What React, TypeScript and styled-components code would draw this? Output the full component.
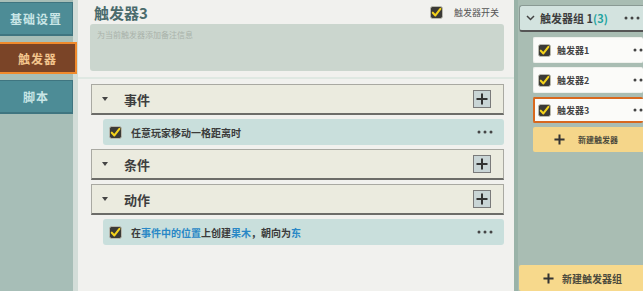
import React from 'react';
import styled, { createGlobalStyle } from 'styled-components';

const GlobalStyle = createGlobalStyle`
  body {
    margin: 0;
    font-family: "Noto Sans CJK SC", "Noto Sans", sans-serif;
    background: #f1f1ee;
  }
`

const Screen = styled.div`
  display: flex;
  width: 643px;
  height: 291px;
  overflow: hidden;
`

const LeftNav = styled.div`
  width: 73px;
  flex-shrink: 0;
  background: #a7beb7;
  display: flex;
  flex-direction: column;
  gap: 6px;
  padding-top: 2px;
  border-right: 5px solid #d3ddd8;
`

const NavTab = styled.div<{ active?: boolean }>`
  height: ${p => (p.active ? '28px' : '31px')};
  display: flex;
  align-items: center;
  justify-content: center;
  font-size: 12px;
  font-weight: 700;
  letter-spacing: 1px;
  color: ${p => (p.active ? '#f3c58d' : '#c9e6e6')};
  background: ${p => (p.active ? '#7a4427' : '#4d8c96')};
  border: ${p => (p.active ? '2px solid #f08a2c' : '1px solid #3f7580')};
  border-left: none;
  border-bottom-width: 2px;
  margin-right: ${p => (p.active ? '-4px' : '0')};
  position: relative;
`

const Main = styled.div`
  flex: 1;
  background: #f1f1ee;
  display: flex;
  flex-direction: column;
  padding: 0 10px 0 12px;
`

const TitleRow = styled.div`
  height: 24px;
  display: flex;
  align-items: center;
  padding-left: 4px;
`

const Title = styled.div`
  font-size: 15px;
  font-weight: 700;
  color: #4a6b6c;
  flex: 1;
`

const SwitchLabel = styled.span`
  font-size: 9px;
  color: #555;
  margin-left: 11px;
  margin-right: 5px;
`

const NoteBox = styled.div`
  height: 47px;
  background: #cbd6ce;
  border-radius: 3px;
  padding: 5px 7px;
  font-size: 8px;
  color: #a9b2aa;
  box-sizing: border-box;
`

const Divider = styled.div`
  height: 2px;
  background: #dfe8e2;
  margin: 6px -10px 5px -12px;
`

const Sections = styled.div`
  display: flex;
  flex-direction: column;
  gap: 4px;
  padding-left: 1px;
`

const SectionHeader = styled.div`
  height: 31px;
  box-sizing: border-box;
  background: #ebebdf;
  border: 1px solid #a9a9a2;
  border-bottom: 2px solid #6c6c68;
  display: flex;
  align-items: center;
  padding: 0 12px 0 10px;
`

const Caret = styled.span`
  width: 0;
  height: 0;
  border-left: 3px solid transparent;
  border-right: 3px solid transparent;
  border-top: 4px solid #444;
  margin-right: 16px;
`

const SectionTitle = styled.span`
  flex: 1;
  font-size: 13px;
  font-weight: 700;
  color: #3e3e3e;
`

const PlusButton = styled.div`
  width: 18px;
  height: 18px;
  box-sizing: border-box;
  background: #c9d5d6;
  border: 1px solid #7a7a7a;
  display: flex;
  align-items: center;
  justify-content: center;
`

const RuleRow = styled.div`
  height: 26px;
  margin-left: 12px;
  background: #c9dfdc;
  border-radius: 3px;
  display: flex;
  align-items: center;
  padding: 0 11px 0 6px;
  gap: 9px;
`

const RuleText = styled.span`
  flex: 1;
  font-size: 10px;
  font-weight: 700;
  color: #3b3b3b;
`

const Link = styled.span`
  color: #2a88c6;
`

const RightSplit = styled.div`
  width: 4px;
  flex-shrink: 0;
  background: #9ab3a8;
`

const RightPanel = styled.div`
  width: 125px;
  flex-shrink: 0;
  background: #a9bdb3;
  display: flex;
  flex-direction: column;
  padding-top: 5px;
  padding-left: 1px;
  box-sizing: border-box;
`

const GroupHeader = styled.div`
  height: 27px;
  box-sizing: border-box;
  background: #d3e3df;
  border: 1px solid #8a9a94;
  border-bottom: 2px solid #555;
  border-right: none;
  border-radius: 3px 0 0 3px;
  display: flex;
  align-items: center;
  padding: 0 3px 0 6px;
  gap: 5px;
`

const GroupTitle = styled.span`
  flex: 1;
  font-size: 11px;
  font-weight: 700;
  color: #3d3d3d;
  white-space: nowrap;
`

const Count = styled.span`
  color: #1fa3a0;
`

const TriggerList = styled.div`
  display: flex;
  flex-direction: column;
  gap: 4px;
  padding: 5px 0 0 14px;
`

const TriggerItem = styled.div<{ selected?: boolean }>`
  height: 26px;
  box-sizing: border-box;
  background: #fbfbf9;
  border-radius: 2px;
  border: ${p => (p.selected ? '2px solid #d8681e' : '1px solid #eef0ec')};
  border-right: none;
  display: flex;
  align-items: center;
  padding-left: ${p => (p.selected ? '3px' : '4px')};
  gap: 6px;
  white-space: nowrap;
  overflow: hidden;
`

const TriggerName = styled.span`
  flex: 1;
  font-size: 9px;
  font-weight: 700;
  color: #444;
`

const YellowButton = styled.div<{ tall?: boolean }>`
  height: ${p => (p.tall ? '26px' : '25px')};
  background: ${p => (p.tall ? '#f7d98c' : '#f5d68a')};
  border-radius: 2px 0 0 2px;
  display: flex;
  align-items: center;
  padding-left: ${p => (p.tall ? '24px' : '21px')};
  gap: ${p => (p.tall ? '8px' : '13px')};
  font-size: ${p => (p.tall ? 10 : 8)}px;
  font-weight: 700;
  color: #4b4a3c;
  white-space: nowrap;
`

const Spacer = styled.div`
  flex: 1;
`

function CheckBox({ size = 13 }: { size?: number }) {
  return (
    <svg width={size} height={size} viewBox="0 0 14 14" style={{ flexShrink: 0 }}>
      <rect x="0.5" y="0.5" width="13" height="13" rx="2.5" fill="#3b3a36" stroke="#bdbdb2" />
      <path d="M3 7.2 L5.8 10.2 L11.2 3" fill="none" stroke="#f4d21c" strokeWidth="2.2" strokeLinecap="round" strokeLinejoin="round" />
    </svg>
  );
}

function Plus({ size = 12, stroke = 2 }: { size?: number; stroke?: number }) {
  return (
    <svg width={size} height={size} viewBox="0 0 12 12">
      <path d="M6 0.5 V11.5 M0.5 6 H11.5" stroke="#333" strokeWidth={stroke} />
    </svg>
  );
}

function Dots({ count = 3 }: { count?: number }) {
  const w = count * 6 - 2;
  return (
    <svg width={w} height="4" viewBox={`0 0 ${w} 4`} style={{ flexShrink: 0 }}>
      {Array.from({ length: count }).map((_, i) => (
        <circle key={i} cx={2 + i * 6} cy="2" r="1.5" fill="#444" />
      ))}
    </svg>
  );
}

function Chevron() {
  return (
    <svg width="9" height="6" viewBox="0 0 9 6">
      <path d="M1 1 L4.5 4.5 L8 1" fill="none" stroke="#444" strokeWidth="1.5" />
    </svg>
  );
}

export default function App() {
  const triggers = ['触发器1', '触发器2', '触发器3'];

  return (
    <Screen>
      <GlobalStyle />
      <LeftNav>
        <NavTab>基础设置</NavTab>
        <NavTab active>触发器</NavTab>
        <NavTab>脚本</NavTab>
      </LeftNav>

      <Main>
        <TitleRow>
          <Title>触发器3</Title>
          <CheckBox />
          <SwitchLabel>触发器开关</SwitchLabel>
        </TitleRow>
        <NoteBox>为当前触发器添加备注信息</NoteBox>
        <Divider />
        <Sections>
          <SectionHeader>
            <Caret />
            <SectionTitle>事件</SectionTitle>
            <PlusButton><Plus /></PlusButton>
          </SectionHeader>
          <RuleRow>
            <CheckBox />
            <RuleText>任意玩家移动一格距离时</RuleText>
            <Dots />
          </RuleRow>
          <SectionHeader>
            <Caret />
            <SectionTitle>条件</SectionTitle>
            <PlusButton><Plus /></PlusButton>
          </SectionHeader>
          <SectionHeader>
            <Caret />
            <SectionTitle>动作</SectionTitle>
            <PlusButton><Plus /></PlusButton>
          </SectionHeader>
          <RuleRow>
            <CheckBox />
            <RuleText>
              在<Link>事件中的位置</Link>上创建<Link>果木</Link>，朝向为<Link>东</Link>
            </RuleText>
            <Dots />
          </RuleRow>
        </Sections>
      </Main>

      <RightSplit />

      <RightPanel>
        <GroupHeader>
          <Chevron />
          <GroupTitle>触发器组 1<Count>(3)</Count></GroupTitle>
          <Dots />
        </GroupHeader>
        <TriggerList>
          {triggers.map((t, i) => (
            <TriggerItem key={t} selected={i === 2}>
              <CheckBox />
              <TriggerName>{t}</TriggerName>
              <Dots count={2} />
            </TriggerItem>
          ))}
          <YellowButton>
            <Plus size={11} stroke={2.2} />
            新建触发器
          </YellowButton>
        </TriggerList>
        <Spacer />
        <YellowButton tall>
          <Plus size={11} stroke={2.2} />
          新建触发器组
        </YellowButton>
      </RightPanel>
    </Screen>
  );
}
